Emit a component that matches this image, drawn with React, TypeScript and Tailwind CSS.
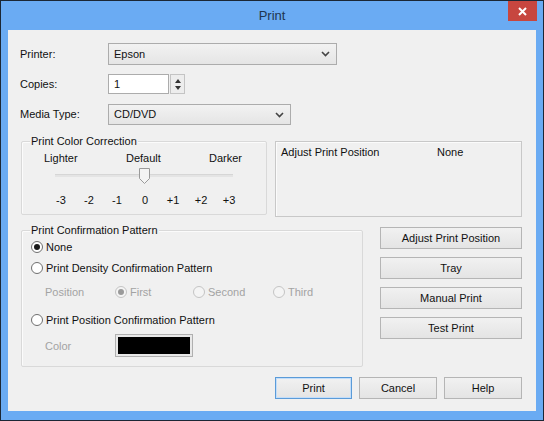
import React from "react";

const font = { fontFamily: '"Liberation Sans", Arial, sans-serif' };

function Chevron() {
  return (
    <svg width="9" height="6" viewBox="0 0 9 6" className="shrink-0">
      <path d="M1 1 L4.5 4.5 L8 1" fill="none" stroke="#444" strokeWidth="1.6" />
    </svg>
  );
}

function Select({ value, width, height }: { value: string; width: string; height: string }) {
  return (
    <div
      className={`${width} ${height} flex items-center justify-between pl-[5px] pr-[6px] border border-[#acacac] bg-gradient-to-b from-[#f2f2f2] to-[#e5e5e5] text-[#111]`}
    >
      <span>{value}</span>
      <Chevron />
    </div>
  );
}

function Radio({ checked, disabled }: { checked?: boolean; disabled?: boolean }) {
  return (
    <span
      className={`w-[12px] h-[12px] rounded-full border flex items-center justify-center shrink-0 ${
        disabled ? "border-[#c4c4c4] bg-[#f4f4f4]" : "border-[#6f6f6f] bg-white"
      }`}
    >
      {checked && (
        <span className={`w-[6px] h-[6px] rounded-full ${disabled ? "bg-[#9a9a9a]" : "bg-[#1a1a1a]"}`} />
      )}
    </span>
  );
}

function Btn({ label, primary, width }: { label: string; primary?: boolean; width: string }) {
  return (
    <div
      className={`${width} h-[22px] flex items-center justify-center border bg-gradient-to-b from-[#f1f1f1] to-[#e4e4e4] text-[#111] ${
        primary ? "border-[#5b9bd8] shadow-[inset_0_0_0_1px_#c3defa]" : "border-[#b5b5b5]"
      }`}
    >
      {label}
    </div>
  );
}

function Group({
  legend,
  className,
  children,
}: {
  legend: string;
  className: string;
  children: React.ReactNode;
}) {
  return (
    <div className={`relative border border-[#d9d9d9] rounded-[2px] shadow-[inset_1px_1px_0_#fbfbfb] ${className}`}>
      <span className="absolute left-[8px] -top-[7px] px-[1px] leading-[12px] bg-[#f0f0f0]">{legend}</span>
      {children}
    </div>
  );
}

export default function App() {
  return (
    <div className="w-[544px] h-[421px] bg-[#1b2735] p-[1px]" style={font}>
      <div className="w-full h-full bg-[#6aabf3] flex flex-col">
        <div className="h-[29px] flex items-start shrink-0">
          <div className="flex-1 h-full flex items-center justify-center text-[13px] text-[#1f3550] pl-[35px]">
            Print
          </div>
          <div className="w-[29px] h-[20px] mr-[6px] bg-[#c7463f] flex items-center justify-center">
            <svg width="9" height="9" viewBox="0 0 9 9">
              <path d="M1 1 L8 8 M8 1 L1 8" stroke="#fff" strokeWidth="2" />
            </svg>
          </div>
        </div>
        <div className="mx-[7px] h-[381px] bg-[#f0f0f0] text-[11px] text-[#111] pl-[12px] pt-[13px]">
          {/* Printer */}
          <div className="flex items-center h-[22px]">
            <span className="w-[88px]">Printer:</span>
            <Select value="Epson" width="w-[229px]" height="h-[22px]" />
          </div>
          <div className="flex items-center h-[20px] mt-[9px]">
            <span className="w-[88px]">Copies:</span>
            <div className="flex h-[20px]">
              <div className="w-[61px] h-[20px] bg-white border border-[#acacac] flex items-center pl-[5px]">1</div>
              <div className="w-[15px] h-[20px] ml-[1px] border border-[#c4c4c4] bg-[#ededed] flex flex-col items-center justify-center gap-[3px]">
                <svg width="6" height="4" viewBox="0 0 6 4"><path d="M0 4 L3 0 L6 4Z" fill="#333" /></svg>
                <svg width="6" height="4" viewBox="0 0 6 4"><path d="M0 0 L3 4 L6 0Z" fill="#333" /></svg>
              </div>
            </div>
          </div>
          <div className="flex items-center h-[21px] mt-[10px]">
            <span className="w-[88px]">Media Type:</span>
            <Select value="CD/DVD" width="w-[183px]" height="h-[21px]" />
          </div>

          {/* middle row */}
          <div className="flex items-start mt-[16px] ml-[1px]">
            <Group legend="Print Color Correction" className="w-[246px] h-[74px]">
              <div className="flex h-[14px] mt-[9px] leading-[14px]">
                <span className="ml-[22px] w-[82px]">Lighter</span>
                <span className="w-[83px]">Default</span>
                <span>Darker</span>
              </div>
              <div className="relative h-[16px] mt-[3px] ml-[33px] w-[178px]">
                <div className="absolute left-0 right-0 top-[6px] h-[3px] bg-[#e4e4e4] border-t border-[#d6d6d6]" />
                <svg className="absolute left-[84px] top-0" width="11" height="16" viewBox="0 0 11 16">
                  <path d="M0.5 0.5 H10.5 V10.5 L5.5 15.5 L0.5 10.5 Z" fill="#f4f4f4" stroke="#9a9a9a" />
                </svg>
              </div>
              <div className="grid grid-cols-[repeat(7,28px)] ml-[25px] mt-[9px] h-[14px] leading-[14px] text-center">
                <span>-3</span>
                <span>-2</span>
                <span>-1</span>
                <span>0</span>
                <span>+1</span>
                <span>+2</span>
                <span>+3</span>
              </div>
            </Group>
            <div className="ml-[8px] w-[247px] h-[76px] border border-[#c8c8c8] shadow-[inset_1px_1px_0_#fbfbfb] flex items-start pt-[3px] pl-[5px] leading-[14px]">
              <span className="w-[156px]">Adjust Print Position</span>
              <span>None</span>
            </div>
          </div>

          {/* lower row */}
          <div className="flex items-start mt-[13px] ml-[1px]">
            <Group legend="Print Confirmation Pattern" className="w-[342px] h-[137px]">
              <div className="pl-[9px] flex flex-col leading-[14px]">
                <div className="flex items-center gap-[3px] h-[14px] mt-[9px]">
                  <Radio checked />
                  <span>None</span>
                </div>
                <div className="flex items-center gap-[3px] h-[14px] mt-[7px]">
                  <Radio />
                  <span>Print Density Confirmation Pattern</span>
                </div>
                <div className="flex items-center h-[14px] mt-[10px] text-[#a3a3a3]">
                  <span className="w-[84px] pl-[14px]">Position</span>
                  <div className="flex items-center gap-[3px] w-[78px]">
                    <Radio checked disabled />
                    <span>First</span>
                  </div>
                  <div className="flex items-center gap-[3px] w-[80px]">
                    <Radio disabled />
                    <span>Second</span>
                  </div>
                  <div className="flex items-center gap-[3px]">
                    <Radio disabled />
                    <span>Third</span>
                  </div>
                </div>
                <div className="flex items-center gap-[3px] h-[14px] mt-[14px]">
                  <Radio />
                  <span>Print Position Confirmation Pattern</span>
                </div>
                <div className="flex items-center mt-[7px]">
                  <span className="w-[84px] pl-[14px] text-[#a3a3a3]">Color</span>
                  <div className="w-[78px] h-[23px] border border-[#b0b0b0] bg-[#e8e8e8] p-[2px]">
                    <div className="w-full h-full bg-black" />
                  </div>
                </div>
              </div>
            </Group>
            <div className="ml-[17px] flex flex-col gap-[8px] -mt-[3px]">
              <Btn label="Adjust Print Position" width="w-[142px]" />
              <Btn label="Tray" width="w-[142px]" />
              <Btn label="Manual Print" width="w-[142px]" />
              <Btn label="Test Print" width="w-[142px]" />
            </div>
          </div>

          {/* bottom buttons */}
          <div className="flex gap-[7px] pl-[255px] mt-[10px]">
            <Btn label="Print" primary width="w-[77px]" />
            <Btn label="Cancel" width="w-[78px]" />
            <Btn label="Help" width="w-[78px]" />
          </div>
        </div>
      </div>
    </div>
  );
}
